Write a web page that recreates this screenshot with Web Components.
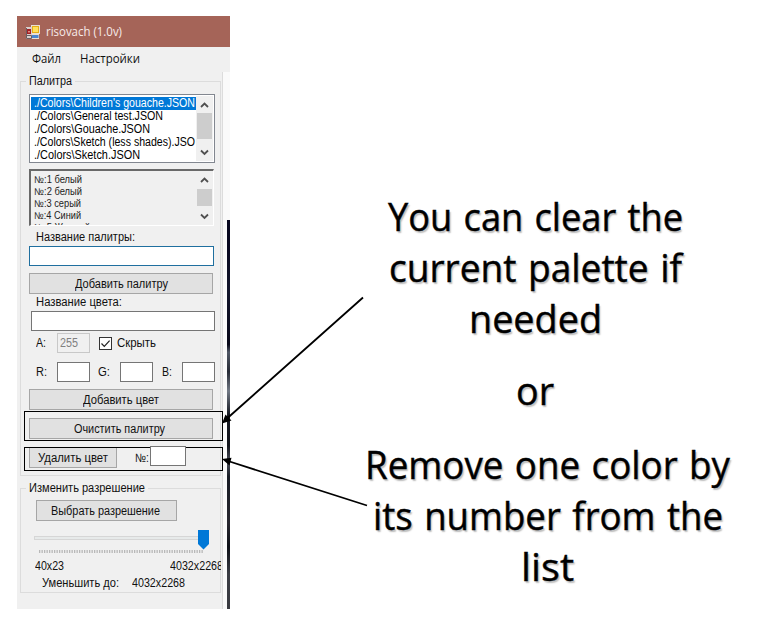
<!DOCTYPE html>
<html lang="ru"><head><meta charset="utf-8"><title>risovach</title>
<style>body{margin:0;background:#fff;overflow:hidden}</style></head><body>
<palette-guide></palette-guide>
<script>
const define=(name,html,setup)=>customElements.define(name,class extends HTMLElement{
  constructor(){super();this.attachShadow({mode:'open'}).innerHTML=html}
  connectedCallback(){if(setup)setup(this,this.shadowRoot)}
});

/* A single line of text stretched or condensed to the width in "w". */
define('fit-text',`<style>:host{display:block;flex:none;height:14px;line-height:14px;white-space:pre}
span{display:inline-block;transform-origin:0 50%}</style><span><slot></slot></span>`,(el,root)=>{
  const w=+el.getAttribute('w'),s=root.querySelector('span');
  el.style.width=w+'px';
  s.style.transform=`scaleX(${w/s.getBoundingClientRect().width})`;
});

define('form-button',`<style>:host{box-sizing:border-box;display:flex;flex:none;align-items:center;justify-content:center;height:21px;background:#e1e1e1;border:1px solid #a6a6a6}</style><slot></slot>`);
define('form-input',`<style>:host{box-sizing:border-box;display:flex;flex:none;align-items:center;height:20px;background:#fff;border:1px solid #757575}
:host([focused]){border-color:#1f6f9f}:host([disabled]){background:#f0f0f0;border-color:#c8c8c8;color:#808080;padding-left:2px}</style><slot></slot>`);
define('form-check',`<style>:host{box-sizing:border-box;display:block;flex:none;width:13px;height:13px;background:#fff;border:1px solid #333}svg{display:block}</style>
<svg width="11" height="11"><path d="M1.5 5.5L4.3 8.3L9.6 2.6" fill="none" stroke="#222" stroke-width="1.2"/></svg>`);
define('scroll-bar',`<style>:host{display:flex;flex-direction:column;align-items:center;justify-content:space-between;width:17px;flex:none;background:#f0f0f0}
i{display:block;width:15px;background:#cdcdcd;height:var(--thumb);margin-bottom:var(--rest)}svg{display:block;flex:none}</style>
<svg width="15" height="17"><path d="M4 11L7.500 7.500L11 11" fill="none" stroke="#505050" stroke-width="1.8"/></svg><i></i>
<svg width="15" height="17"><path d="M4 6.500L7.500 10L11 6.500" fill="none" stroke="#505050" stroke-width="1.8"/></svg>`);
define('list-panel',`<style>:host{box-sizing:border-box;display:flex;overflow:hidden;flex:none;background:#fff;border:1px solid #828790;height:69px;width:186px;padding:1px}
.i{flex:1;overflow:hidden;padding-top:1px}
:host([sunken]){background:#f0f0f0;border-color:#696969 #fff #fff #696969;border-width:2px 1px 1px 2px;height:57px;width:185px;padding:0}
:host([sunken]) .i{padding:2px 0 0 3px}</style><div class="i"><slot></slot></div><slot name="bar"></slot>`);
define('list-row',`<style>:host{display:block;height:13px;padding-left:3px;color:#000;overflow:hidden}
:host([selected]){background:#0078d7;color:#fff}:host([small]){height:12px;padding-left:0;font-size:10px;color:#222}
::slotted(fit-text){height:13px!important;line-height:13px!important}</style><slot></slot>`);
define('group-box',`<style>:host{box-sizing:border-box;display:block;border:1px solid #dcdcdc;width:201px;margin-left:3px}
.l{display:flex;width:max-content;height:12px;align-items:center;margin:-7px 0 0 5px;padding:0 3px;background:#f0f0f0}</style>
<div class="l"><slot name="legend"></slot></div><slot></slot>`);
define('track-bar',`<style>:host{display:block;height:24px;width:176px}svg{display:block}</style>
<svg width="176" height="24"><rect x=".5" y="6.500" width="170" height="3" fill="#e7eaea" stroke="#d6d6d6"/>
<path d="M5 21.500H170" stroke="#b8b8b8" stroke-width="3" stroke-dasharray="1.300 1.200"/>
<path d="M164 0H175V14L169.500 19.500L164 14Z" fill="#0078d7"/></svg>`);
define('title-bar',`<style>:host{display:flex;align-items:center;gap:6px;height:31px;padding-left:9px;background:#a56458;color:#f7ebe8;font:12.500px "Open Sans",sans-serif}svg{display:block}</style>
<svg width="14" height="14"><path d="M0 2H5V0H14V9H13V14H0Z" fill="#eadfd2"/><rect y="2" width="6" height="12" fill="#d9cfcd"/><rect x="1" y="4" width="4" height="5" fill="#a42026"/><rect x="2" y="6" width="2" height="1.500" fill="#e08a80"/><path d="M.5 3V13.500H5.500V10.500H.5" fill="none" stroke="#6b5f62"/>
<rect x="6" y="1" width="7" height="7" fill="#e5ad18"/><rect x="7" y="2" width="5" height="5" fill="#ffe05c"/><rect x="6" y="10" width="6.500" height="3" fill="#4a86d0"/></svg><slot></slot>`);
define('menu-bar',`<style>:host{display:flex;align-items:center;gap:19px;height:25px;box-sizing:border-box;padding:0 0 1px 15px;background:#f0f0f0;font:12.500px "Open Sans",sans-serif}</style><slot></slot>`);

/* Program window: every control sits in a fixed-height row of a group. */
define('app-window',`<style>
:host{display:block;width:213px;height:593px;color:#111;font:12px "Liberation Sans",Arial,sans-serif}
.b{display:flex;height:537px}
.form{width:206px;background:#f0f0f0;border-right:1px solid #dcdcdc;box-sizing:border-box;padding-top:9px}
.edge{width:7px;display:flex;justify-content:flex-end;align-items:flex-end;background:#fafafa}
.edge i{width:3px;height:389px;background:linear-gradient(#080820 0 7%,#12152b 18%,#080819 32%,#505765 34%,#262a35 39%,#727985 44%,#151821 50%,#11131a 58%,#4c505b 62%,#181c25 66%,#28272f 78%,#0d1017 84%,#3b3d44 91%,#393a40)}
.r{display:flex;align-items:center}
group-box+group-box{margin-top:12px}
.mark{box-sizing:border-box;display:flex;width:199px;margin-left:3px;border:1px solid #000;position:relative}
.res{overflow:hidden}
</style>
<title-bar><fit-text w="76">risovach (1.0v)</fit-text></title-bar>
<menu-bar><fit-text w="29">Файл</fit-text><fit-text w="60">Настройки</fit-text></menu-bar>
<div class="b"><div class="form">
<group-box style="height:395px"><fit-text slot="legend" w="43">Палитра</fit-text>
<list-panel style="margin:7px 0 0 8px"><list-row selected><fit-text w="161">./Colors\\Children's gouache.JSON</fit-text></list-row><list-row><fit-text w="129">./Colors\\General test.JSON</fit-text></list-row><list-row><fit-text w="116">./Colors\\Gouache.JSON</fit-text></list-row><list-row><fit-text w="161">./Colors\\Sketch (less shades).JSO</fit-text></list-row><list-row><fit-text w="106">./Colors\\Sketch.JSON</fit-text></list-row><scroll-bar slot="bar" style="--thumb:26px;--rest:5px"></scroll-bar></list-panel>
<list-panel sunken style="margin:6px 0 0 8px"><list-row small><fit-text w="48">№:1 белый</fit-text></list-row><list-row small><fit-text w="48">№:2 белый</fit-text></list-row><list-row small><fit-text w="47">№:3 серый</fit-text></list-row><list-row small><fit-text w="47">№:4 Синий</fit-text></list-row><list-row small><fit-text w="56">№:5 Желтый</fit-text></list-row><scroll-bar slot="bar" style="--thumb:17px;--rest:2px"></scroll-bar></list-panel>
<div class="r" style="height:20px;padding:2px 0 0 15px;box-sizing:border-box"><fit-text w="99">Название палитры:</fit-text></div>
<form-input focused style="width:185px;margin-left:8px"></form-input>
<form-button style="width:184px;margin:7px 0 0 8px"><fit-text w="93">Добавить палитру</fit-text></form-button>
<div class="r" style="height:17px;padding:0 0 2px 15px;box-sizing:border-box"><fit-text w="86">Название цвета:</fit-text></div>
<form-input style="width:184px;margin-left:10px"></form-input>
<div class="r" style="height:20px;margin:2px 0 0 15px"><fit-text w="10">A:</fit-text><form-input disabled style="width:33px;margin-left:11px"><fit-text w="18">255</fit-text></form-input><form-check style="margin-left:9px"></form-check><fit-text w="39" style="margin-left:5px">Скрыть</fit-text></div>
<div class="r" style="height:20px;margin:9px 0 0 15px"><fit-text w="11">R:</fit-text><form-input style="width:33px;margin-left:10px"></form-input><fit-text w="12" style="margin-left:8px">G:</fit-text><form-input style="width:33px;margin-left:10px"></form-input><fit-text w="10" style="margin-left:9px">B:</fit-text><form-input style="width:33px;margin-left:10px"></form-input></div>
<form-button style="width:184px;margin:7px 0 0 8px"><fit-text w="76">Добавить цвет</fit-text></form-button>
<div class="mark" style="height:30px;margin-top:1px"><form-button style="width:184px;margin:6px 0 0 4px"><fit-text w="91" style="margin-right:3px">Очистить палитру</fit-text></form-button></div>
<div class="mark" style="height:24px;margin-top:6px"><form-button style="width:88px;height:20px;margin:0 0 0 4px;border-top:0"><fit-text w="70">Удалить цвет</fit-text></form-button><fit-text w="14" style="margin:3px 0 0 18px">№:</fit-text><form-input style="width:36px;margin:-2px 0 0 1px"></form-input></div>
</group-box>
<group-box style="height:105px"><fit-text slot="legend" w="116">Изменить разрешение</fit-text>
<form-button style="width:141px;margin:6px 0 0 15px"><fit-text w="109" style="margin-right:3px">Выбрать разрешение</fit-text></form-button>
<track-bar style="margin:9px 0 0 13px"></track-bar>
<div class="r res" style="height:14px;margin-top:5px;width:200px"><fit-text w="29" style="margin-left:14px">40x23</fit-text><fit-text w="53" style="margin-left:106px">4032x2268</fit-text></div>
<div class="r" style="height:14px;margin-top:3px"><fit-text w="77" style="margin-left:21px">Уменьшить до:</fit-text><fit-text w="53" style="margin-left:13px">4032x2268</fit-text></div>
</group-box></div><div class="edge"><i></i></div></div>`);

define('guide-caption',`<style>:host{display:flex;flex-direction:column;align-items:center;width:370px;color:#000;font:38px "Open Sans",sans-serif;word-spacing:2px;-webkit-text-stroke:.4px #000;text-shadow:1.500px 1.500px 1.500px #0004}
fit-text{height:51px;line-height:51px}.g{margin-top:21px}.h{margin-top:22.500px}</style>
<fit-text w="295">You can clear the</fit-text><fit-text w="293">current palette if</fit-text><fit-text w="133">needed</fit-text>
<fit-text class="g" w="38">or</fit-text>
<fit-text class="h" w="365" style="margin-left:24px">Remove one color by</fit-text><fit-text w="350" style="margin-left:25px">its number from the</fit-text><fit-text w="53" style="margin-left:25px">list</fit-text>`);

define('callout-arrows',`<style>:host{position:absolute;left:0;top:0;pointer-events:none}svg{display:block}</style>
<svg width="775" height="633" stroke="#000" stroke-width="1.800"><path d="M363 297.500L227 418.500M367 505.500L228 461"/>
<path d="M222 423.500L225.500 414.500L231.500 420.500ZM222 459L231.500 457.700L229.500 465.500Z" stroke="none"/></svg>`);

define('palette-guide',`<style>:host{display:flex;align-items:flex-start;width:775px;height:633px;position:relative}
app-window{margin:16px 0 0 17px}guide-caption{margin:191px 0 0 120px}</style>
<app-window></app-window><guide-caption></guide-caption><callout-arrows></callout-arrows>`);
</script></body></html>
